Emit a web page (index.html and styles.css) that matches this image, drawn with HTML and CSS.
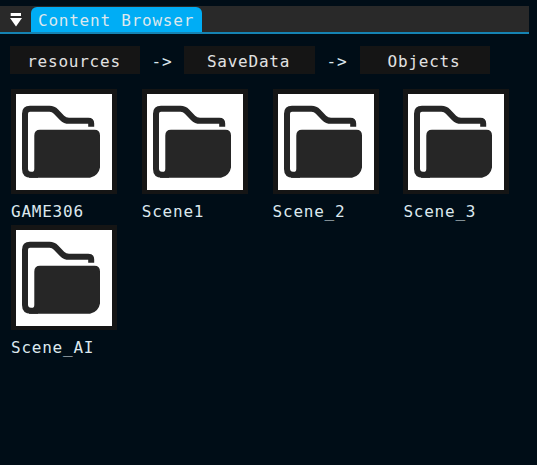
FILE: index.html
```
<!DOCTYPE html>
<html lang="en">
<head>
<meta charset="utf-8">
<title>Content Browser</title>
<link rel="stylesheet" href="styles.css">
</head>
<body>
<svg class="defs" width="0" height="0">
  <symbol id="folder" viewBox="0 0 96 96">
    <path d="M75.2 32.7V29.5Q75.2 26.8 72.3 26.8H53Q49 26.8 46 23.8L40 17.6Q37.3 14.8 33.5 14.8H14Q9 14.8 9 19.8V75Q9 80.7 15 80.7H22" fill="none" stroke="#262626" stroke-width="6"/>
    <path d="M18.3 41.5Q18.3 35.7 24 35.7H78.5Q84 35.7 84 41.5V73.5Q82.5 82 74 83.7H13V78L15 78.4Q18.3 78.4 18.3 75Z" fill="#262626"/>
    <path d="M12 75Q12 78.4 15 78.4V80H11V75Z" fill="#262626"/>
  </symbol>
</svg>
<header class="bar">
  <svg class="collapse" width="12" height="14" viewBox="0 0 12 14"><path d="M.7 0H11V3H.7ZM0 5H12L6 13.5Z" fill="#fff"/></svg>
  <div class="tab">Content Browser</div>
</header>
<nav class="path">
  <div class="crumb">resources</div><span class="arrow">-&gt;</span><div class="crumb wide">SaveData</div><span class="arrow">-&gt;</span><div class="crumb">Objects</div>
</nav>
<main class="grid">
  <div class="item"><svg class="thumb"><use href="#folder"/></svg><div class="name">GAME306</div></div>
  <div class="item"><svg class="thumb"><use href="#folder"/></svg><div class="name">Scene1</div></div>
  <div class="item"><svg class="thumb"><use href="#folder"/></svg><div class="name">Scene_2</div></div>
  <div class="item"><svg class="thumb"><use href="#folder"/></svg><div class="name">Scene_3</div></div>
  <div class="item"><svg class="thumb"><use href="#folder"/></svg><div class="name">Scene_AI</div></div>
</main>
</body>
</html>
```
FILE: styles.css
```
* { box-sizing: border-box; }
body {
  margin: 0;
  height: 465px;
  padding-top: 6px;
  overflow: hidden;
  background: #000d17;
  color: #dce8ee;
  font: 16px/20px "DejaVu Sans Mono", "Liberation Mono", monospace;
  letter-spacing: 0.77px;
  white-space: nowrap;
}
.defs { display: block; }
.bar {
  display: flex;
  align-items: flex-end;
  width: 529px;
  height: 28px;
  background: #292929;
  border-bottom: 2px solid #1583b3;
}
.collapse { margin: 0 9px 5px 10px; }
.tab {
  width: 171px;
  height: 25px;
  padding: 4px 0 0 7px;
  border-radius: 6px 6px 0 0;
  background: #00adf5;
}
.path {
  display: flex;
  align-items: center;
  margin: 12px 0 0 10px;
  height: 28px;
}
.crumb {
  width: 130px;
  height: 28px;
  padding-right: 2px;
  line-height: 32px;
  text-align: center;
  background: #151515;
  color: #e2e2e2;
}
.wide { width: 131px; }
.arrow { width: 44px; padding-top: 3px; text-align: center; }
.wide + .arrow { width: 45px; padding-right: 1px; }
.grid {
  display: grid;
  grid-template-columns: repeat(4, 130.8px);
  grid-auto-rows: 136.4px;
  margin: 15px 0 0 11px;
}
.thumb {
  display: block;
  width: 106px;
  height: 105px;
  border: 5px solid #151515;
  border-bottom-width: 4px;
  background: #fff;
}
.name { margin-top: 8px; }
```
